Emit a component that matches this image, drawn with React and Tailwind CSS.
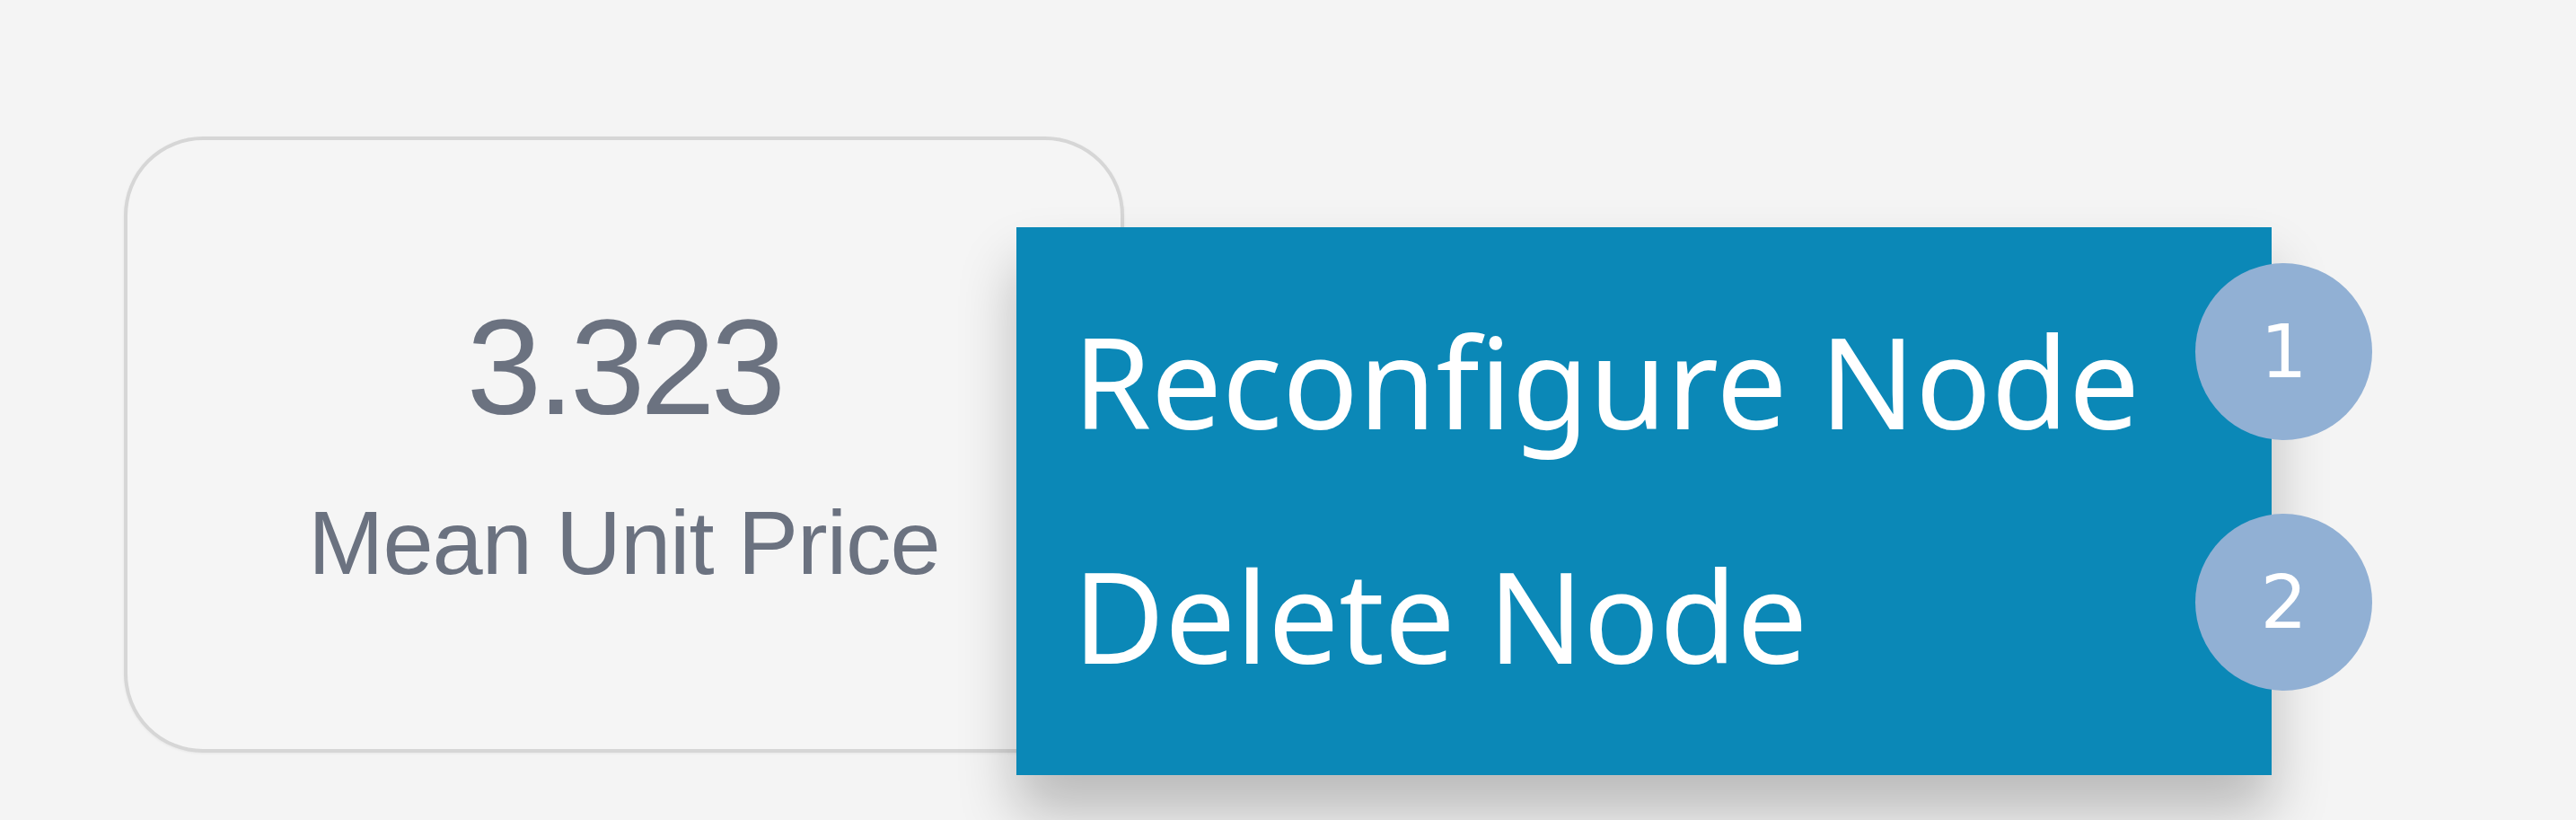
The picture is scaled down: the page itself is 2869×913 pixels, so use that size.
import React from 'react';

const menuItems = [
  { label: 'Reconfigure Node', badge: '1' },
  { label: 'Delete Node', badge: '2' },
];

function Badge({ n, className }) {
  return (
    <div
      className={`absolute left-[2445px] w-[197px] h-[197px] rounded-full bg-[#91b0d4] flex items-center justify-center text-white text-[82px] leading-none font-['DejaVu_Sans',sans-serif] ${className}`}
    >
      {n}
    </div>
  );
}

export default function App() {
  return (
    <div className="relative w-[2869px] h-[913px] overflow-hidden bg-[#f4f4f4] pt-[152px] pl-[138px]">
      {/* metric node */}
      <div className="w-[1114px] h-[686px] rounded-[88px] border-4 border-[#d6d6d6] bg-[#f5f5f5] shadow-[0_1px_3px_rgba(0,0,0,0.06)] flex flex-col items-center pt-[178px] text-[#6b7280] font-['Liberation_Sans',Arial,sans-serif]">
        <div className="text-[150px] leading-none tracking-[-5px]">3.323</div>
        <div className="mt-[70px] text-[101px] leading-none tracking-[-1px]">Mean Unit Price</div>
      </div>

      {/* context menu */}
      <div className="absolute left-[1132px] top-[253px] w-[1398px] h-[610px] bg-[#0b88b7] shadow-[0_42px_60px_rgba(0,0,0,0.24)] pt-[40px] pl-[63px] text-white font-['Noto_Sans',sans-serif]">
        {menuItems.map((item) => (
          <div key={item.label} className="text-[140px] leading-[261px] whitespace-nowrap">
            {item.label}
          </div>
        ))}
      </div>

      <Badge n="1" className="top-[293px]" />
      <Badge n="2" className="top-[572px]" />
    </div>
  );
}
